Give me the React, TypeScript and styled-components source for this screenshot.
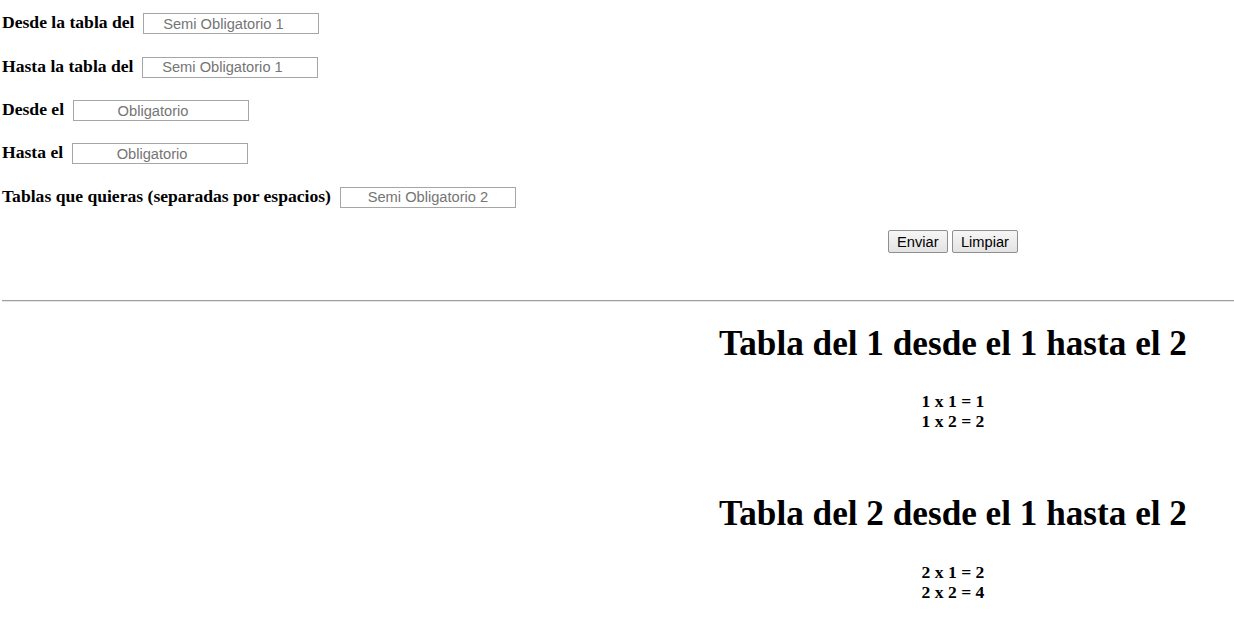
import React from "react";
import styled, { createGlobalStyle } from "styled-components";

const Global = createGlobalStyle`
  html, body { margin: 0; padding: 0; background: #fff; }
  body { font-family: "Liberation Serif", "Times New Roman", serif; color: #000; }
`;

const Page = styled.div`
  width: 1232px;
  padding: 13.3px 0 0 2px;
`;

const Form = styled.form`
  display: flex;
  flex-direction: column;
  gap: 22.4px;
`;

const Row = styled.div`
  display: flex;
  align-items: center;
  gap: 9px;
  height: 21px;
`;

const Label = styled.label`
  font-family: "Liberation Serif", "Times New Roman", serif;
  font-weight: bold;
  font-size: 17.6px;
  line-height: 20px;
  padding-bottom: 3px;
  white-space: nowrap;
`;

const Input = styled.input<{ $shift?: boolean }>`
  box-sizing: border-box;
  width: 176px;
  height: 21px;
  margin: 0;
  padding: ${(p) => (p.$shift ? "0 17px 0 1px" : "0 1px")};
  border: 1px solid #a6a6a6;
  background: #fff;
  font-family: "Liberation Sans", Arial, sans-serif;
  font-size: 14.67px;
  text-align: center;
  outline: none;
  &::placeholder { color: #757575; opacity: 1; }
`;

const RightColumn = styled.div`
  display: flex;
  justify-content: flex-end;
`;

const Column = styled.div`
  width: 562px;
  display: flex;
  flex-direction: column;
  align-items: center;
`;

const ButtonRow = styled.div`
  display: flex;
  gap: 4.3px;
  height: 23px;
`;

const Button = styled.button`
  box-sizing: border-box;
  height: 23px;
  margin: 0;
  padding: 0 8px;
  font-family: "Liberation Sans", Arial, sans-serif;
  font-size: 14.67px;
  color: #000;
  background: linear-gradient(#f6f6f6, #e3e3e3);
  border: 1px solid #8f8f8f;
  border-radius: 2px;
`;

const Rule = styled.hr`
  margin: 47px 0 0 0;
  height: 0;
  border: 0;
  border-top: 1px solid #a0a0a0;
  border-bottom: 1px solid #e6e6e6;
`;

const Results = styled.div`
  padding-top: 22px;
`;

const Block = styled.section<{ $first?: boolean }>`
  margin-top: ${(p) => (p.$first ? "0" : "63px")};
  display: flex;
  flex-direction: column;
  align-items: center;
`;

const Heading = styled.h1`
  margin: 0 0 27.2px 0;
  font-family: "Liberation Serif", "Times New Roman", serif;
  font-weight: bold;
  font-size: 35.2px;
  line-height: 40px;
  white-space: nowrap;
`;

const Line = styled.div`
  font-family: "Liberation Serif", "Times New Roman", serif;
  font-weight: bold;
  font-size: 17.6px;
  line-height: 20px;
`;

const fields = [
  { label: "Desde la tabla del", ph: "Semi Obligatorio 1", shift: true },
  { label: "Hasta la tabla del", ph: "Semi Obligatorio 1", shift: true },
  { label: "Desde el", ph: "Obligatorio", shift: true },
  { label: "Hasta el", ph: "Obligatorio", shift: true },
  { label: "Tablas que quieras (separadas por espacios)", ph: "Semi Obligatorio 2", shift: false },
];

const tables = [1, 2];
const from = 1;
const to = 2;

export default function App() {
  return (
    <>
      <Global />
      <Page>
        <Form onSubmit={(e) => e.preventDefault()}>
          {fields.map((f) => (
            <Row key={f.label}>
              <Label>{f.label}</Label>
              <Input type="text" placeholder={f.ph} $shift={f.shift} />
            </Row>
          ))}
          <RightColumn>
            <Column>
              <ButtonRow>
                <Button type="submit">Enviar</Button>
                <Button type="reset">Limpiar</Button>
              </ButtonRow>
            </Column>
          </RightColumn>
        </Form>
        <Rule />
        <Results>
          <RightColumn>
            <Column>
              {tables.map((t, i) => (
                <Block key={t} $first={i === 0}>
                  <Heading>{`Tabla del ${t} desde el ${from} hasta el ${to}`}</Heading>
                  {Array.from({ length: to - from + 1 }, (_, k) => from + k).map((n) => (
                    <Line key={n}>{`${t} x ${n} = ${t * n}`}</Line>
                  ))}
                </Block>
              ))}
            </Column>
          </RightColumn>
        </Results>
      </Page>
    </>
  );
}
